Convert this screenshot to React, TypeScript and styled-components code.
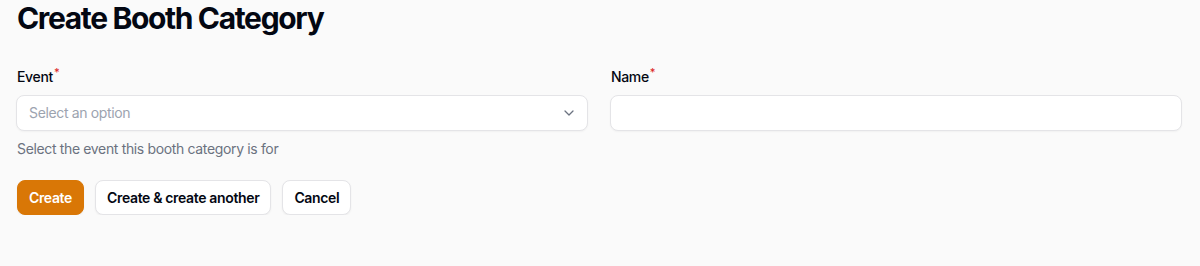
import React from "react";
import styled, { createGlobalStyle } from "styled-components";

const Global = createGlobalStyle`
  html, body { margin: 0; padding: 0; background: #fafafa; }
  body { font-family: Inter, "Noto Sans", sans-serif; color: #030712; -webkit-font-smoothing: antialiased; letter-spacing: -0.35px; }
  * { box-sizing: border-box; }
`;

const Page = styled.div`
  padding: 0 18px 0 16px;
  display: flex;
  flex-direction: column;
`;

const Title = styled.h1`
  margin: 0 0 0 1px;
  font-size: 30px;
  line-height: 36px;
  font-weight: 700;
  letter-spacing: -1.35px;
  color: #030712;
`;

const Grid = styled.div`
  margin-top: 31px;
  display: grid;
  grid-template-columns: 1fr 1fr;
  column-gap: 22px;
`;

const Field = styled.div`
  display: flex;
  flex-direction: column;
  gap: 8px;
`;

const Label = styled.label`
  font-size: 14px;
  line-height: 20px;
  font-weight: 500;
  color: #030712;
  padding-left: 1px;
`;

const Req = styled.sup`
  color: #dc2626;
  font-weight: 500;
  font-size: 11px;
  line-height: 0;
  margin-left: 1px;
`;

const Box = styled.div`
  height: 36px;
  background: #fff;
  border: 1px solid #e4e4e7;
  border-radius: 8px;
  box-shadow: 0 1px 2px rgba(0, 0, 0, 0.04);
  display: flex;
  align-items: center;
  justify-content: space-between;
  padding: 0 10px 0 12px;
`;

const Placeholder = styled.span`
  font-size: 14px;
  line-height: 20px;
  color: #9ca3af;
`;

const Help = styled.p`
  margin: 0;
  padding-left: 1px;
  font-size: 14px;
  line-height: 20px;
  color: #6b7280;
`;

const Actions = styled.div`
  margin-top: 21px;
  padding-left: 1px;
  display: flex;
  gap: 11px;
`;

const Button = styled.button<{ $primary?: boolean }>`
  height: 35px;
  padding: 0 11px;
  border-radius: 8px;
  font-family: Inter, "Noto Sans", sans-serif;
  font-size: 14px;
  font-weight: 600;
  line-height: 20px;
  letter-spacing: -0.35px;
  cursor: pointer;
  background: ${(p) => (p.$primary ? "#d97706" : "#ffffff")};
  color: ${(p) => (p.$primary ? "#ffffff" : "#030712")};
  border: 1px solid ${(p) => (p.$primary ? "#d97706" : "#e4e4e7")};
  box-shadow: 0 1px 2px rgba(0, 0, 0, 0.05);
`;

const Chevron = () => (
  <svg width="16" height="16" viewBox="0 0 24 24" fill="none" stroke="#6b7280" strokeWidth="1.9" strokeLinecap="round" strokeLinejoin="round">
    <path d="m6 9 6 6 6-6" />
  </svg>
);

export default function App() {
  return (
    <>
      <Global />
      <Page>
        <Title>Create Booth Category</Title>
        <Grid>
          <Field>
            <Label>
              Event<Req>*</Req>
            </Label>
            <Box>
              <Placeholder>Select an option</Placeholder>
              <Chevron />
            </Box>
            <Help>Select the event this booth category is for</Help>
          </Field>
          <Field>
            <Label>
              Name<Req>*</Req>
            </Label>
            <Box />
          </Field>
        </Grid>
        <Actions>
          <Button $primary>Create</Button>
          <Button>Create &amp; create another</Button>
          <Button>Cancel</Button>
        </Actions>
      </Page>
    </>
  );
}
